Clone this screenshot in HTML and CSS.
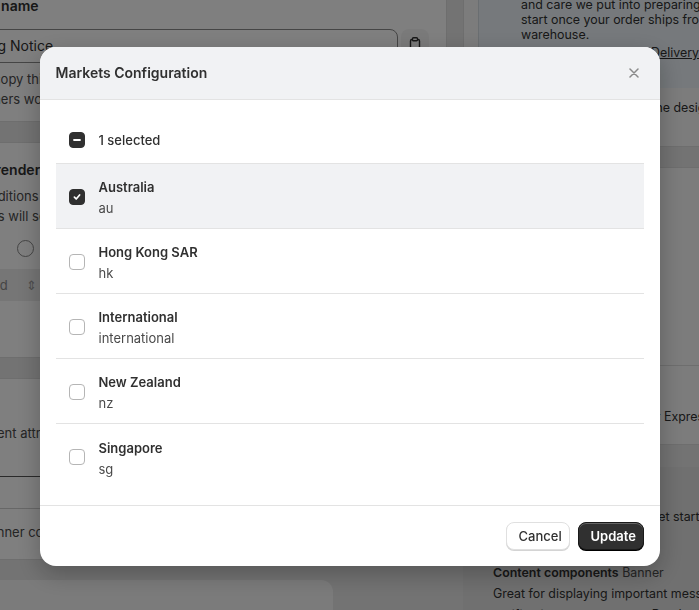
FILE: index.html
```html
<!DOCTYPE html>
<html lang="en">
<head>
<meta charset="utf-8">
<title>Markets Configuration</title>
<link rel="stylesheet" href="styles.css">
</head>
<body>
<div class="page">
  <div class="main">
    <section class="card card-top">
      <div class="label">Template name</div>
      <div class="field-row">
        <div class="input">Shipping Notice</div>
        <div class="icon-btn">
          <svg width="12" height="14" viewBox="0 0 12 14"><rect x="1.5" y="2.5" width="9" height="10" rx="1.5" fill="none" stroke="#303030" stroke-width="1.4"/><rect x="3.5" y="0.8" width="5" height="3" rx="1" fill="#fff" stroke="#303030" stroke-width="1.4"/></svg>
        </div>
      </div>
      <p class="help">You can copy this template so that</p>
      <p class="help">to customers won't see any change</p>
    </section>
    <section class="card card-render">
      <div class="label">Checkout rendering</div>
      <p class="help cond">These conditions decide when the banner</p>
      <p class="help">customers will see it at checkout</p>
      <div class="radios">
        <span class="radio"></span><span class="radio-label">Always</span>
      </div>
      <div class="select"><span>Not selected</span><span class="chev">&#8661;</span></div>
    </section>
    <section class="card card-attr">
      <p class="help attr">Use the content attributes to customise the</p>
      <div class="line-input"></div>
      <p class="help banner">The banner content appears here</p>
    </section>
    <section class="card card-bottom"></section>
  </div>
  <div class="side">
    <div class="side-card1">
      <div class="info">
        <p>and care we put into preparing your order.</p>
        <p>start once your order ships from our</p>
        <p>warehouse.</p>
        <p class="link-row"><a class="link">Read our Delivery Policy</a></p>
      </div>
      <p class="side-text design">Customise the design</p>
    </div>
    <div class="side-card2">
      <div class="side-line"></div>
      <p class="side-text expre">Standard or Express</p>
    </div>
    <div class="side-card3">
      <p class="side-text start">Get started</p>
      <p class="cc"><b>Content components</b> Banner</p>
      <p class="cc-text">Great for displaying important messages and</p>
      <p class="cc-text">notifications to customers. Read more</p>
    </div>
  </div>
</div>

<div class="overlay">
  <div class="modal">
    <div class="modal-header">
      <h2 class="modal-title">Markets Configuration</h2>
      <button class="close" aria-label="Close">
        <svg width="10" height="10" viewBox="0 0 10 10"><path d="M1 1L9 9M9 1L1 9" stroke="#8a8a8a" stroke-width="1.5" stroke-linecap="round"/></svg>
      </button>
    </div>
    <div class="modal-body">
      <div class="select-all">
        <span class="cb cb-on">
          <svg width="10" height="10" viewBox="0 0 10 10"><path d="M2 5H8" stroke="#fff" stroke-width="1.8" stroke-linecap="round"/></svg>
        </span>
        <span class="sel-text">1 selected</span>
      </div>
      <div class="row row-active">
        <span class="cb cb-on">
          <svg width="10" height="10" viewBox="0 0 10 10"><path d="M2.4 5.2L4.2 7L7.6 3" fill="none" stroke="#fff" stroke-width="1.7" stroke-linecap="round" stroke-linejoin="round"/></svg>
        </span>
        <div class="row-text"><div class="name">Australia</div><div class="code">au</div></div>
      </div>
      <div class="row">
        <span class="cb"></span>
        <div class="row-text"><div class="name">Hong Kong SAR</div><div class="code">hk</div></div>
      </div>
      <div class="row">
        <span class="cb"></span>
        <div class="row-text"><div class="name">International</div><div class="code">international</div></div>
      </div>
      <div class="row">
        <span class="cb"></span>
        <div class="row-text"><div class="name">New Zealand</div><div class="code">nz</div></div>
      </div>
      <div class="row row-last">
        <span class="cb"></span>
        <div class="row-text"><div class="name">Singapore</div><div class="code">sg</div></div>
      </div>
    </div>
    <div class="modal-footer">
      <button class="btn btn-secondary">Cancel</button>
      <button class="btn btn-primary">Update</button>
    </div>
  </div>
</div>
</body>
</html>
```
FILE: styles.css
```css
* { box-sizing: border-box; }
html, body { margin: 0; padding: 0; }
body {
  width: 699px;
  height: 610px;
  overflow: hidden;
  font-family: Inter, "Noto Sans", "Liberation Sans", sans-serif;
  color: #303030;
  background: #e6e6e6;
}
p { margin: 0; }

/* ---------- background page ---------- */
.page {
  display: flex;
  height: 610px;
  overflow: hidden;
}
.main {
  flex: 0 0 auto;
  width: 517px;
  margin-left: -70px;
  display: flex;
  flex-direction: column;
  gap: 20px;
  margin-top: -14px;
}
.card {
  flex-shrink: 0;
  background: #ffffff;
  border: 1px solid #dcdcdc;
  border-left: none;
  padding: 0 0 0 10px;
}
.card-top { height: 136px; padding-top: 8px; }
.label { font-size: 14px; font-weight: 600; line-height: 22px; margin-left: -5px; }
.field-row { display: flex; align-items: flex-start; gap: 3px; margin-top: 12px; }
.input {
  width: 458px;
  height: 34px;
  border: 1px solid #8a8a8a;
  border-radius: 8px;
  padding: 7px 0 0 7px;
  font-size: 14px;
  flex-shrink: 0;
}
.icon-btn {
  width: 28px;
  height: 28px;
  border-radius: 8px;
  background: #f4f4f4;
  display: flex;
  justify-content: center;
  padding-top: 8px;
}
.help { font-size: 13px; line-height: 20px; color: #4a4a4a; }
.card-top .help:first-of-type { margin-top: 6px; }

.card-render { height: 216px; padding-top: 16px; }
.card-render .label { margin-bottom: 5px; margin-left: -13px; }
.help.cond { margin-left: -7px; }
.radios { display: flex; align-items: center; gap: 8px; margin: 14px 0 0 77px; }
.radio { width: 17px; height: 17px; border: 1px solid #8a8a8a; border-radius: 50%; }
.radio-label { font-size: 13px; }
.select {
  margin: 12px 0 0 -10px;
  height: 32px;
  background: #ececec;
  display: flex;
  align-items: center;
  padding-left: 0;
  gap: 18px;
  font-size: 13px;
  color: #8a8a8a;
  width: 200px;
}
.chev { font-size: 13px; color: #9a9a9a; }

.card-attr { height: 182px; padding-top: 44px; }
.help.attr { margin-left: -21px; }
.line-input {
  height: 33px;
  border-top: 1px solid #555;
  border-bottom: 1px solid #cfcfcf;
  margin: 33px 0 0 -10px;
}
.help.banner { margin: 13px 0 0 14px; }

.card-bottom {
  width: 403px;
  height: 60px;
  border-radius: 0 12px 0 0;
  border: none;
  background: #f7f7f7;
}

.side {
  flex: 1 0 auto;
  margin-left: 16px;
  display: flex;
  flex-direction: column;
  overflow: hidden;
}
.side-card1 {
  flex-shrink: 0;
  height: 147px;
  background: #f9f9f9;
  border-left: 1px solid #dcdcdc;
  border-bottom: 1px solid #dcdcdc;
  padding-left: 14px;
}
.info {
  height: 91px;
  margin-top: -3px;
  background: #ecf3f8;
  padding-left: 42px;
  font-size: 12.4px;
  line-height: 15px;
  color: #303030;
  white-space: nowrap;
  border-left: 1px solid #d5dde2;
}
.link-row { margin-top: 3px; margin-left: 74px; }
.link { text-decoration: underline; color: #303030; }
.side-text { font-size: 12.4px; line-height: 20px; white-space: nowrap; color: #303030; }
.design { margin-top: 10px; padding-left: 108px; }
.side-card2 {
  flex-shrink: 0;
  margin-top: 20px;
  height: 278px;
  background: #f9f9f9;
  border-left: 1px solid #dcdcdc;
  border-top: 1px solid #dcdcdc;
  border-bottom: 1px solid #dcdcdc;
  padding-top: 197px;
}
.side-line { border-top: 1px solid #dcdcdc; }
.expre { margin-top: 41px; padding-left: 128px; }
.side-card3 {
  flex-shrink: 0;
  margin-top: 22px;
  flex: 1 0 auto;
  background: #e0e0e0;
  padding-top: 40px;
}
.start { padding-left: 186px; }
.cc { margin-top: 36px; padding-left: 30px; font-size: 12.4px; line-height: 20px; color: #4a4a4a; white-space: nowrap; }
.cc b { color: #303030; font-weight: 600; }
.cc-text { padding-left: 30px; font-size: 12.4px; line-height: 20px; white-space: nowrap; color: #303030; margin-top: 1px; }

/* ---------- modal ---------- */
.overlay {
  position: fixed;
  inset: 0;
  background: rgba(0, 0, 0, 0.5);
  display: flex;
  justify-content: center;
  align-items: flex-start;
  padding-top: 47px;
}
.modal {
  width: 620px;
  background: #ffffff;
  border-radius: 16px;
  overflow: hidden;
  box-shadow: 0 8px 24px rgba(0, 0, 0, 0.25);
}
.modal-header {
  height: 53px;
  background: #f1f2f4;
  border-bottom: 1px solid #e3e3e3;
  display: flex;
  align-items: center;
  justify-content: space-between;
  padding: 0 21px 1px 16px;
}
.modal-title {
  margin: 0;
  font-size: 14px;
  font-weight: 600;
  color: #303030;
}
.close {
  background: none;
  border: none;
  padding: 0;
  width: 10px;
  height: 10px;
  display: flex;
}
.modal-body { padding: 16px; }
.select-all {
  height: 48px;
  display: flex;
  align-items: center;
  gap: 14px;
  padding-left: 13px;
  border-bottom: 1px solid #e3e3e3;
}
.sel-text { font-size: 13px; font-weight: 500; color: #303030; }
.row {
  height: 65px;
  display: flex;
  align-items: center;
  gap: 14px;
  padding: 1px 13px 0;
  border-bottom: 1px solid #e3e3e3;
}
.row-last { border-bottom: none; }
.row-active { background: #f1f2f4; }
.cb {
  flex: 0 0 16px;
  width: 16px;
  height: 16px;
  border: 1px solid #b5b5b5;
  border-radius: 4px;
  background: #fff;
  display: flex;
  align-items: center;
  justify-content: center;
}
.cb-on { background: #303030; border-color: #303030; }
.row-text { display: flex; flex-direction: column; gap: 1px; margin-top: 2px; }
.name { font-size: 13px; font-weight: 600; line-height: 20px; color: #303030; }
.code { font-size: 13px; line-height: 20px; color: #4a4a4a; }
.modal-footer {
  height: 61px;
  border-top: 1px solid #e3e3e3;
  display: flex;
  justify-content: flex-end;
  align-items: center;
  gap: 8px;
  padding: 0 16px;
}
.btn {
  height: 28px;
  border-radius: 8px;
  font-family: inherit;
  font-size: 13px;
  padding: 0 12px;
  cursor: pointer;
}
.btn-secondary {
  width: 64px;
  background: #fff;
  color: #303030;
  font-weight: 500;
  border: 1px solid #e0e0e0;
  box-shadow: 0 1px 0 #d4d4d4;
}
.btn-primary {
  width: 66px;
  background: #303030;
  color: #fff;
  font-weight: 600;
  border: 1px solid #1a1a1a;
  box-shadow: inset 0 1px 0 rgba(255, 255, 255, 0.25), 0 1px 0 #000;
}
```
